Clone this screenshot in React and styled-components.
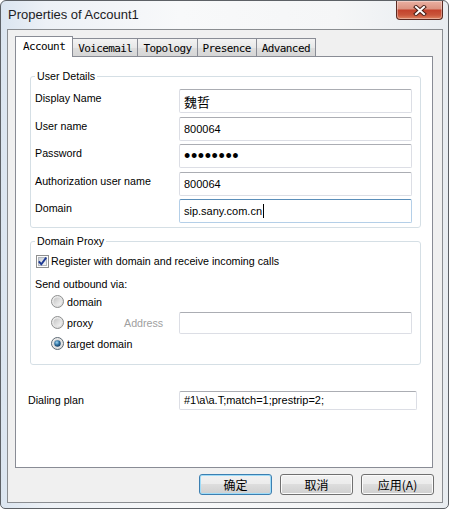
import React, { useId } from 'react';
import styled, { createGlobalStyle, css } from 'styled-components';

const GlobalStyle = createGlobalStyle`
  html, body {
    margin: 0;
    padding: 0;
    background: #fff;
  }
  body {
    font-family: "Liberation Sans", Arial, sans-serif;
    color: #000;
  }
`;

const tabs = ['Account', 'Voicemail', 'Topology', 'Presence', 'Advanced'];

const CloseGlyph = () => (
   <svg width="14" height="11" viewBox="0 0 14 11">
      <path d="M3 2 L11 9 M11 2 L3 9" stroke="#4a2018" strokeWidth="4" strokeLinecap="square" />
      <path d="M3 2 L11 9 M11 2 L3 9" stroke="#fff" strokeWidth="2" strokeLinecap="square" />
   </svg>
);

const CheckBox = () => {
   const id = useId();
   return (
      <svg width="13" height="13" viewBox="0 0 13 13">
         <defs>
            <linearGradient id={id} x1="0" y1="0" x2="1" y2="1">
               <stop offset="0" stopColor="#c9ced6" />
               <stop offset="1" stopColor="#f8f8f8" />
            </linearGradient>
         </defs>
         <rect x="0.5" y="0.5" width="12" height="12" fill="#fdfdfd" stroke="#8e8f8f" />
         <rect x="2.5" y="2.5" width="8" height="8" fill={`url(#${id})`} stroke="#b3b8be" />
         <path d="M2.8 6.3 L5.3 9.2 L10.2 2.6" fill="none" stroke="#1d3a94" strokeWidth="1.9" />
      </svg>
   );
};

const Radio = ({ checked }) => {
   const id = useId();
   return (
      <svg width="13" height="13" viewBox="0 0 13 13">
         <defs>
            <linearGradient id={`${id}o`} x1="0" y1="0" x2="1" y2="1">
               <stop offset="0" stopColor="#f4f4f4" />
               <stop offset="1" stopColor="#d6d6d6" />
            </linearGradient>
            <linearGradient id={`${id}i`} x1="0" y1="0" x2="1" y2="1">
               <stop offset="0" stopColor="#c4c4c4" />
               <stop offset="1" stopColor="#f6f6f6" />
            </linearGradient>
            <radialGradient id={`${id}d`} cx="0.4" cy="0.35" r="0.7">
               <stop offset="0" stopColor="#9fd6f4" />
               <stop offset="0.55" stopColor="#2a6d9e" />
               <stop offset="1" stopColor="#17385a" />
            </radialGradient>
         </defs>
         <circle cx="6.5" cy="6.5" r="6" fill={`url(#${id}o)`} stroke={checked ? '#5e6a74' : '#8e8f8f'} />
         <circle cx="6.5" cy="6.5" r="4" fill={`url(#${id}i)`} />
         {checked && <circle cx="6.5" cy="6.5" r="3.2" fill={`url(#${id}d)`} />}
      </svg>
   );
};

const App = () => (
   <>
      <GlobalStyle />
      <Window>
         <TitleBar>
            <Title>Properties of Account1</Title>
            <CloseButton>
               <CloseGlyph />
            </CloseButton>
         </TitleBar>
         <Client>
            <TabStrip>
               {tabs.map((t, i) => (
                  <Tab key={t} $active={i === 0}>{t}</Tab>
               ))}
            </TabStrip>
            <Panel>
               <Group $bottom={4}>
                  <Legend>User Details</Legend>
                  <Stack $gap={3.5}>
                     <FieldRow>
                        <FieldLabel>Display Name</FieldLabel>
                        <TextBox><CjkText>魏哲</CjkText></TextBox>
                     </FieldRow>
                     <FieldRow>
                        <FieldLabel>User name</FieldLabel>
                        <TextBox>800064</TextBox>
                     </FieldRow>
                     <FieldRow>
                        <FieldLabel>Password</FieldLabel>
                        <TextBox><Mask>••••••••</Mask></TextBox>
                     </FieldRow>
                     <FieldRow>
                        <FieldLabel>Authorization user name</FieldLabel>
                        <TextBox>800064</TextBox>
                     </FieldRow>
                     <FieldRow>
                        <FieldLabel>Domain</FieldLabel>
                        <TextBox $focused>sip.sany.com.cn<Caret /></TextBox>
                     </FieldRow>
                  </Stack>
               </Group>
               <Group $bottom={9.5}>
                  <Legend>Domain Proxy</Legend>
                  <Stack $gap={0}>
                     <CheckRow>
                        <CheckBox />
                        <span>Register with domain and receive incoming calls</span>
                     </CheckRow>
                     <Caption>Send outbound via:</Caption>
                     <RadioRow>
                        <RadioOption><Radio />domain</RadioOption>
                     </RadioRow>
                     <RadioRow>
                        <RadioOption><Radio />proxy</RadioOption>
                        <AddressLabel>Address</AddressLabel>
                        <TextBox $h={22} />
                     </RadioRow>
                     <RadioRow>
                        <RadioOption><Radio checked />target domain</RadioOption>
                     </RadioRow>
                  </Stack>
               </Group>
               <DialRow>
                  <DialLabel>Dialing plan</DialLabel>
                  <TextBox $w={238} $h={19}>#1\a\a.T;match=1;prestrip=2;</TextBox>
               </DialRow>
            </Panel>
            <ButtonRow>
               <DialogButton $default>确定</DialogButton>
               <DialogButton>取消</DialogButton>
               <DialogButton>应用(A)</DialogButton>
            </ButtonRow>
         </Client>
      </Window>
   </>
);

export default App;

const labelFont = css`
   font-size: 10.7px;
   line-height: 14px;
`;

const Window = styled.div`
   box-sizing: border-box;
   width: 449px;
   height: 509px;
   border: 1px solid #5d6166;
   border-radius: 6px 6px 5px 5px;
   padding: 0 5px 5px 6px;
   background: linear-gradient(90deg, #dbe5f0 0%, #edf1f6 10%, #f8f9fa 40%, #f5f6f7 75%, #e8ecf0 100%);
   display: flex;
   flex-direction: column;
   overflow: hidden;
`;

const TitleBar = styled.div`
   height: 28px;
   display: flex;
   align-items: flex-start;
   justify-content: space-between;
`;

const Title = styled.div`
   padding-left: 1px;
   margin-top: 6px;
   font-size: 13px;
   line-height: 16px;
   color: #1c1c24;
`;

const CloseButton = styled.div`
   box-sizing: border-box;
   width: 47px;
   height: 19px;
   border: 1px solid #5a2a22;
   border-top: none;
   border-radius: 0 0 4px 4px;
   background: linear-gradient(#eab0a2 0%, #dc9482 42%, #c4432d 52%, #c9553b 78%, #e08563 100%);
   box-shadow: inset 0 0 0 1px rgba(255, 255, 255, 0.35);
   display: flex;
   align-items: center;
   justify-content: center;
`;

const Client = styled.div`
   box-sizing: border-box;
   height: 474px;
   border: 1px solid #8a8d91;
   background: #f0f0f0;
   padding: 6px 9px 0 7px;
   display: flex;
   flex-direction: column;
`;

const TabStrip = styled.div`
   display: flex;
   align-items: flex-end;
   height: 21px;
   margin-bottom: -1px;
   position: relative;
   z-index: 1;
`;

const Tab = styled.div`
   box-sizing: border-box;
   height: 18px;
   margin-bottom: 1px;
   padding: 1px 5px 0;
   border: 1px solid #898c95;
   border-bottom: none;
   background: linear-gradient(#f3f3f3 0%, #e8e8e8 50%, #dedede 50%, #d6d6d6 100%);
   font-family: "DejaVu Sans Mono", "Liberation Mono", monospace;
   font-size: 11px;
   letter-spacing: -0.6px;
   display: flex;
   align-items: center;
   white-space: nowrap;

   & + & {
      margin-left: -1px;
   }

   ${(p) =>
      p.$active &&
      css`
         height: 21px;
         margin-bottom: 0;
         padding: 0 7px 2px;
         background: #fff;
      `}
`;

const Panel = styled.div`
   box-sizing: border-box;
   height: 412px;
   background: #fff;
   border: 1px solid #898c95;
   padding: 12px 11px 0 14px;
   display: flex;
   flex-direction: column;
`;

const Group = styled.fieldset`
   margin: 0;
   min-width: 0;
   border: 1px solid #d5dfe5;
   border-radius: 3px;
   padding: 6px 8px ${(p) => p.$bottom}px 4px;

   & + & {
      margin-top: 6px;
   }
`;

const Legend = styled.legend`
   padding: 0 2px;
   ${labelFont}
`;

const Stack = styled.div`
   display: flex;
   flex-direction: column;
   gap: ${(p) => p.$gap}px;
`;

const FieldRow = styled.div`
   display: flex;
   align-items: flex-start;
`;

const FieldLabel = styled.div`
   width: 144px;
   flex: none;
   padding-top: 2px;
   ${labelFont}
`;

const TextBox = styled.div`
   box-sizing: border-box;
   width: ${(p) => p.$w || 233}px;
   height: ${(p) => p.$h || 24}px;
   flex: none;
   border: 1px solid #dcdee5;
   border-top-color: #abadb3;
   border-radius: 2px;
   background: #fff;
   padding: 0 4px;
   display: flex;
   align-items: center;
   font-size: 11px;
   white-space: nowrap;

   ${(p) =>
      p.$focused &&
      css`
         border-color: #b4cfe8;
         border-top-color: #5b8fba;
      `}
`;

const CjkText = styled.span`
   font-family: "Noto Sans CJK SC", sans-serif;
   font-size: 13px;
`;

const Mask = styled.span`
   font-size: 18px;
   letter-spacing: 0.6px;
   line-height: 1;
`;

const Caret = styled.span`
   display: inline-block;
   width: 1px;
   height: 14px;
   margin-left: 1px;
   background: #000;
`;

const CheckRow = styled.div`
   display: flex;
   align-items: center;
   gap: 2px;
   height: 14px;
   margin-left: 1px;
   ${labelFont}

   svg {
      flex: none;
   }
`;

const Caption = styled.div`
   margin-top: 9px;
   ${labelFont}
`;

const RadioRow = styled.div`
   display: flex;
   align-items: center;
   height: 21px;
   padding-left: 16px;
`;

const RadioOption = styled.div`
   min-width: 73px;
   display: flex;
   align-items: center;
   gap: 3px;
   white-space: nowrap;
   ${labelFont}

   svg {
      flex: none;
   }
`;

const AddressLabel = styled.div`
   width: 55px;
   color: #a0a0a0;
   ${labelFont}
`;

const DialRow = styled.div`
   display: flex;
   align-items: center;
   margin-top: 26px;
   margin-left: -2px;
`;

const DialLabel = styled.div`
   width: 151px;
   ${labelFont}
`;

const ButtonRow = styled.div`
   display: flex;
   justify-content: flex-end;
   gap: 8px;
   margin-top: 6px;
   margin-right: -1px;
`;

const DialogButton = styled.div`
   box-sizing: border-box;
   width: 73px;
   height: 21px;
   border: 1px solid #707070;
   border-radius: 3px;
   background: linear-gradient(#f2f2f2 0%, #ebebeb 50%, #dddddd 50%, #cfcfcf 100%);
   box-shadow: inset 0 0 0 1px #fbfbfb;
   display: flex;
   align-items: center;
   justify-content: center;
   font-family: "Noto Sans CJK SC", sans-serif;
   font-size: 12px;

   ${(p) =>
      p.$default &&
      css`
         border-color: #3c7fb1;
         box-shadow: inset 0 0 0 1px #9fdcf8;
      `}
`;
